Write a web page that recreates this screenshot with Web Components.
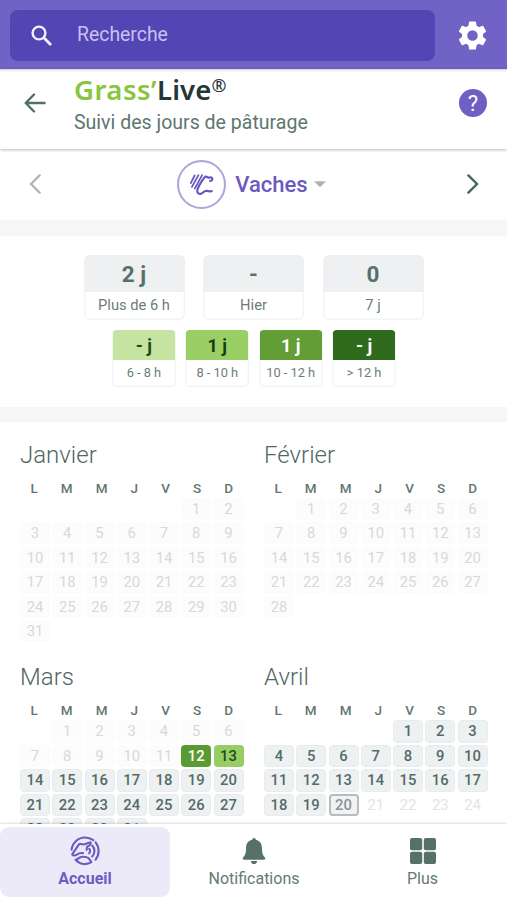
<!DOCTYPE html>
<html lang="fr">
<head>
<meta charset="utf-8">
<title>Grass’Live</title>
<style>
html,body{margin:0;height:100%;overflow:hidden;background:#fff}
body{font-family:Roboto,"Liberation Sans",sans-serif;color:#5c726d}
</style>
</head>
<body>
<grass-app></grass-app>
<script>
const define=(name,html)=>{
  customElements.define(name,class extends HTMLElement{
    constructor(){super();this.attachShadow({mode:'open'});}
    connectedCallback(){
      const t=document.createElement('template');
      t.innerHTML='<style>*{box-sizing:border-box}:host{display:block;box-sizing:border-box}</style>'+(typeof html==='function'?html(this):html);
      this.shadowRoot.replaceChildren(t.content.cloneNode(true));
    }
  });
};

define('search-bar',`<style>
:host{display:flex;height:69px;padding:10px 17px 9px 10px;background:#7162c6;align-items:center;justify-content:space-between}
.field{width:425px;height:51px;border-radius:8px;background:#5445b4;display:flex;align-items:center;color:#c9c0f2;font-size:19.4px;line-height:24px;padding:0 0 0 21px;gap:25px}
.field span{margin-top:-1px}
svg{display:block}
</style>
<div class="field"><svg width="21" height="21" viewBox="0 0 21 21" fill="none" stroke="#f5f2ff" stroke-width="2.4"><circle cx="8" cy="8" r="6.4"/><path d="M12.6 12.6 20 20" stroke-width="2.8"/></svg><span>Recherche</span></div>
<svg width="35" height="35" viewBox="0 0 24 24" fill="#fff"><path d="M19.14 12.94c.04-.3.06-.61.06-.94s-.02-.64-.07-.94l2.03-1.58c.18-.14.23-.41.12-.61l-1.92-3.32c-.12-.22-.37-.29-.59-.22l-2.39.96c-.5-.38-1.03-.7-1.62-.94l-.36-2.54c-.04-.24-.24-.41-.48-.41h-3.84c-.24 0-.43.17-.47.41l-.36 2.54c-.59.24-1.13.57-1.62.94l-2.39-.96c-.22-.08-.47 0-.59.22L2.74 8.87c-.12.21-.08.47.12.61l2.03 1.58c-.05.3-.09.63-.09.94s.02.64.07.94l-2.03 1.58c-.18.14-.23.41-.12.61l1.92 3.32c.12.22.37.29.59.22l2.39-.96c.5.38 1.03.7 1.62.94l.36 2.54c.05.24.24.41.48.41h3.84c.24 0 .44-.17.47-.41l.36-2.54c.59-.24 1.13-.56 1.62-.94l2.39.96c.22.08.47 0 .59-.22l1.92-3.32c.12-.22.07-.47-.12-.61zM12 15.6a3.6 3.6 0 1 1 0-7.2 3.6 3.6 0 0 1 0 7.2z"/></svg>`);

define('title-bar',`<style>
:host{display:flex;height:80px;padding:0 20px 0 24px;background:#fff;box-shadow:0 1px 3px #0004,inset 0 3px 3px -2px #0003}
.back{margin:24px 28px 0 0}
.text{flex:1}
.logo{font:600 27.5px/32px "Noto Sans","Open Sans",sans-serif;color:#88c540;margin-top:5px;height:32px;white-space:nowrap;letter-spacing:.5px}
.logo b{font-weight:600;color:#263536;letter-spacing:.1px}
.logo i{font-style:normal;font-weight:500;color:#263536;font-size:18px;line-height:0;position:relative;top:-8px}
.sub{font-size:19.55px;line-height:24px;margin-top:5px;color:#60766f;white-space:nowrap}
.help{margin-top:20px;width:28px;height:28px;border-radius:50%;background:#705fc3;color:#fff;font-size:22px;line-height:29px;text-align:center}
</style>
<svg class="back" width="22" height="20" viewBox="0 0 22 20" fill="none" stroke="#527064" stroke-width="2.4" stroke-linecap="round" stroke-linejoin="round"><path d="M20.5 10H2M10 1.5 1.7 10l8.3 8.5"/></svg>
<div class="text"><div class="logo">Grass’<b>Live</b><i>®</i></div><div class="sub">Suivi des jours de pâturage</div></div>
<div class="help">?</div>`);

define('herd-picker',`<style>
:host{display:flex;height:71px;padding:0 28px 1px 29px;align-items:center;justify-content:space-between}
.mid{display:flex;align-items:center;color:#6a5ac0;font-size:22px;font-weight:500;margin-right:5px}
.mid span{margin:0 6px 0 9px}
svg{display:block}
</style>
<svg width="12" height="20" viewBox="0 0 12 20" fill="none" stroke="#b0b9b4" stroke-width="2.3" stroke-linecap="round"><path d="M10.6 1.4 2 10l8.6 8.6"/></svg>
<div class="mid"><svg width="49" height="49" viewBox="0 0 48 48" fill="none" stroke="#6556bd" stroke-width="1.7" stroke-linecap="round" stroke-linejoin="round"><circle cx="24" cy="24" r="23" stroke="#afa5dc" stroke-width="2"/><path d="M17.3 15.2 13.5 22.6M21 14.8 14.6 26.4M24.6 14.8 17.4 28"/><path stroke-width="2.1" d="M32.4 20.6c2.2 0 2.9-2.4 1.5-3.4-1.2-.8-2.4.6-3.6-.1-1.2-.8-2.4-1.2-3.3-.1-1.6 2.2-3.2 4.3-4.5 6.7-1.3 2.3-2.7 4.5-2.7 6.7.1 2.2 1.8 3.2 3.8 2.7 2.1-.7 2.4-2.3 4.3-2.7 1.9-.3 2.2-.1 3.1.3 1 .3 2-.1 3-.2"/></svg><span>Vaches</span><svg width="12" height="7" viewBox="0 0 13 7" fill="#aeb2b1"><path d="M0 0h13L6.5 6.5z"/></svg></div>
<svg width="12" height="20" viewBox="0 0 12 20" fill="none" stroke="#426956" stroke-width="2.4" stroke-linecap="round"><path d="M1.4 1.4 10 10l-8.6 8.6"/></svg>`);

define('stat-card',h=>`<style>
:host{width:101px;height:65px;border-radius:6px;overflow:hidden;text-align:center;background:#fff;box-shadow:inset 0 0 0 1.5px #f3f4f4}
:host([small]){width:64px;height:57px;border-radius:5px}
.v{height:37px;background:var(--bg,#eef0f1);color:var(--fg,#56706a);font-weight:700;font-size:22.5px;line-height:39px}
.l{font-size:14.7px;line-height:26px;color:#6c7d78;white-space:nowrap}
:host([small]) .v{height:30px;font-size:18px;line-height:31px;margin:0 1px}
:host([small]) .l{font-size:12.8px;line-height:26px}
</style><div class="v">${h.getAttribute('value')}</div><div class="l"><slot></slot></div>`);

define('stats-panel',`<style>
:host{height:202px;border:solid #f6f6f6;border-width:16px 0 15px;padding-top:19px;background:#fff}
.row{display:flex;justify-content:center;gap:18.5px}
.row+.row{margin-top:10px;gap:9.4px;padding-left:1px}
</style>
<div class="row"><stat-card value="2 j">Plus de 6 h</stat-card><stat-card value="-">Hier</stat-card><stat-card value="0">7 j</stat-card></div>
<div class="row"><stat-card small value="- j" style="--bg:#c5e3a1;--fg:#24471a">6 - 8 h</stat-card><stat-card small value="1 j" style="--bg:#99cf64;--fg:#173e10">8 - 10 h</stat-card><stat-card small value="1 j" style="--bg:#629d35;--fg:#fff">10 - 12 h</stat-card><stat-card small value="- j" style="--bg:#306b1d;--fg:#fff">&gt; 12 h</stat-card></div>`);

define('month-grid',h=>{
  const n=k=>+h.getAttribute(k)||0;
  const start=n('start'),days=n('days'),from=n('from'),to=n('to');
  let cells='';
  for(let d=1;d<=days;d++){
    let c='off';
    if(from&&d>=from)c='on';
    if(to&&d>to)c='future';
    if(to&&d===to)c='today';
    if(h.title==='Mars'&&d===12)c='dark';
    if(h.title==='Mars'&&d===13)c='light';
    cells+=`<div class="${c}"${d===1?` style="grid-column-start:${start}"`:''}>${d}</div>`;
  }
  return `<style>
:host{width:225px;height:222.4px}
h2{margin:0;font-weight:300;font-size:24px;line-height:30px;color:#52675f}
.week{display:flex;justify-content:space-between;padding:0 12px 0 10.5px;margin-top:10px;height:16px;font-size:13.5px;line-height:16px;font-weight:500;color:#637670}
.grid{display:grid;grid-template-columns:repeat(7,30px);grid-auto-rows:22.4px;column-gap:2.25px;row-gap:2px;margin-top:2px}
.grid div{border-radius:4px;text-align:center;font-size:14.8px;line-height:22px}
.grid .off{color:#d6d9d8;background:#fcfcfc}
.grid .future{color:#e2e4e4}
.grid .on{color:#546b66;font-weight:500;background:#eef1f2;border:1.5px solid #e8ecec;line-height:20px}
.grid .today{color:#8c9391;font-weight:500;background:#f1f2f3;border:2px solid #b9bcbd;line-height:19px}
.grid .dark{background:#599b31;color:#fff;font-weight:500}
.grid .light{background:#97ce64;color:#25481d;font-weight:500}
</style><h2>${h.title}</h2><div class="week">${[...'LMMJVSD'].map(x=>`<span>${x}</span>`).join('')}</div><div class="grid">${cells}</div>`;});

define('year-calendar',`<style>
:host{display:grid;grid-template-columns:225px 225px;column-gap:19px;padding:18px 0 0 20px;align-content:start;flex:1;min-height:0;overflow:hidden}
</style>
<month-grid title="Janvier" start="6" days="31"></month-grid><month-grid title="Février" start="2" days="28"></month-grid>
<month-grid title="Mars" start="2" days="31" from="14"></month-grid><month-grid title="Avril" start="5" days="24" from="1" to="20"></month-grid>`);

define('nav-item',`<style>
:host{display:flex;flex-direction:column;align-items:center;height:70px;border-radius:9px;padding-top:8px;font-size:16px;line-height:20px;color:#657a73}
:host([active]){background:#ece9f8;color:#6c5cc3;font-weight:700}
.icon{height:32px;margin-bottom:2px;display:flex;align-items:center}
</style><div class="icon"><slot name="icon"></slot></div><slot></slot>`);

define('bottom-nav',`<style>
:host{display:grid;grid-template-columns:170px 168px 169px;height:76px;padding-top:3px;background:#fff;box-shadow:0 -1px 2px #0002;position:relative}
svg{display:block}
</style>
<nav-item active><svg slot="icon" width="30" height="30" viewBox="0 0 30 30" fill="none" stroke="#6b5bc1" stroke-width="2.1" stroke-linecap="round" stroke-linejoin="round"><path d="M1.6 13.6C2.4 6.7 8.2 1.5 15 1.5c3.2 0 6 1 8.4 2.7"/><path d="M2.2 18.4 8.6 8.8c.6-1 1.6-1.2 2.8-.7 1.6.6 3.3.3 4.6-.4l4.6-1.4c.5 2-.9 3.6-3.4 4.2l-.6 3.4M2.2 18.4c1 1.7 3.2 1.2 4.6.2 1.5-1.2 3-1.8 6.2-1.5"/><path d="M5.6 23.8c2.6-.4 3.4-3 6.6-3.1 3.6-.1 6.6.7 7.6 3.1l1.6 2.4c-4.8 3-11.6 2.6-15.8-2.4z"/><path d="M19.2 12.8c1.2 1.2 1.2 3.2 0 4.4M22.2 9.6c3 3 3 7.8 0 10.8M25.6 6.4c4 5 4 12.2 0 17.2"/></svg>Accueil</nav-item>
<nav-item><svg slot="icon" width="24" height="28" viewBox="0 0 24 28" fill="#557168"><path d="M12 1c-1.1 0-1.8.8-1.8 1.8C5.8 3.7 4 7.3 4 11.5c0 5-1 6.7-2.7 8.7C.1 21.6.7 22.7 2.2 22.7h19.6c1.5 0 2.1-1.1.9-2.5C21 18.2 20 16.5 20 11.5c0-4.2-1.8-7.8-6.2-8.7C13.8 1.8 13.1 1 12 1zM8.8 24c.2 2 1.5 3.1 3.2 3.1s3-1.1 3.2-3.1z"/></svg>Notifications</nav-item>
<nav-item><svg slot="icon" width="26" height="26" viewBox="0 0 26 26" fill="#557168"><rect width="12.2" height="12.2" rx="2"/><rect x="13.8" width="12.2" height="12.2" rx="2"/><rect y="13.8" width="12.2" height="12.2" rx="2"/><rect x="13.8" y="13.8" width="12.2" height="12.2" rx="2"/></svg>Plus</nav-item>`);

define('grass-app',`<style>
:host{display:flex;flex-direction:column;width:507px;height:900px;overflow:hidden;background:#fff}
</style>
<search-bar></search-bar><title-bar></title-bar><herd-picker></herd-picker><stats-panel></stats-panel><year-calendar></year-calendar><bottom-nav></bottom-nav>`);
</script>
</body>
</html>
